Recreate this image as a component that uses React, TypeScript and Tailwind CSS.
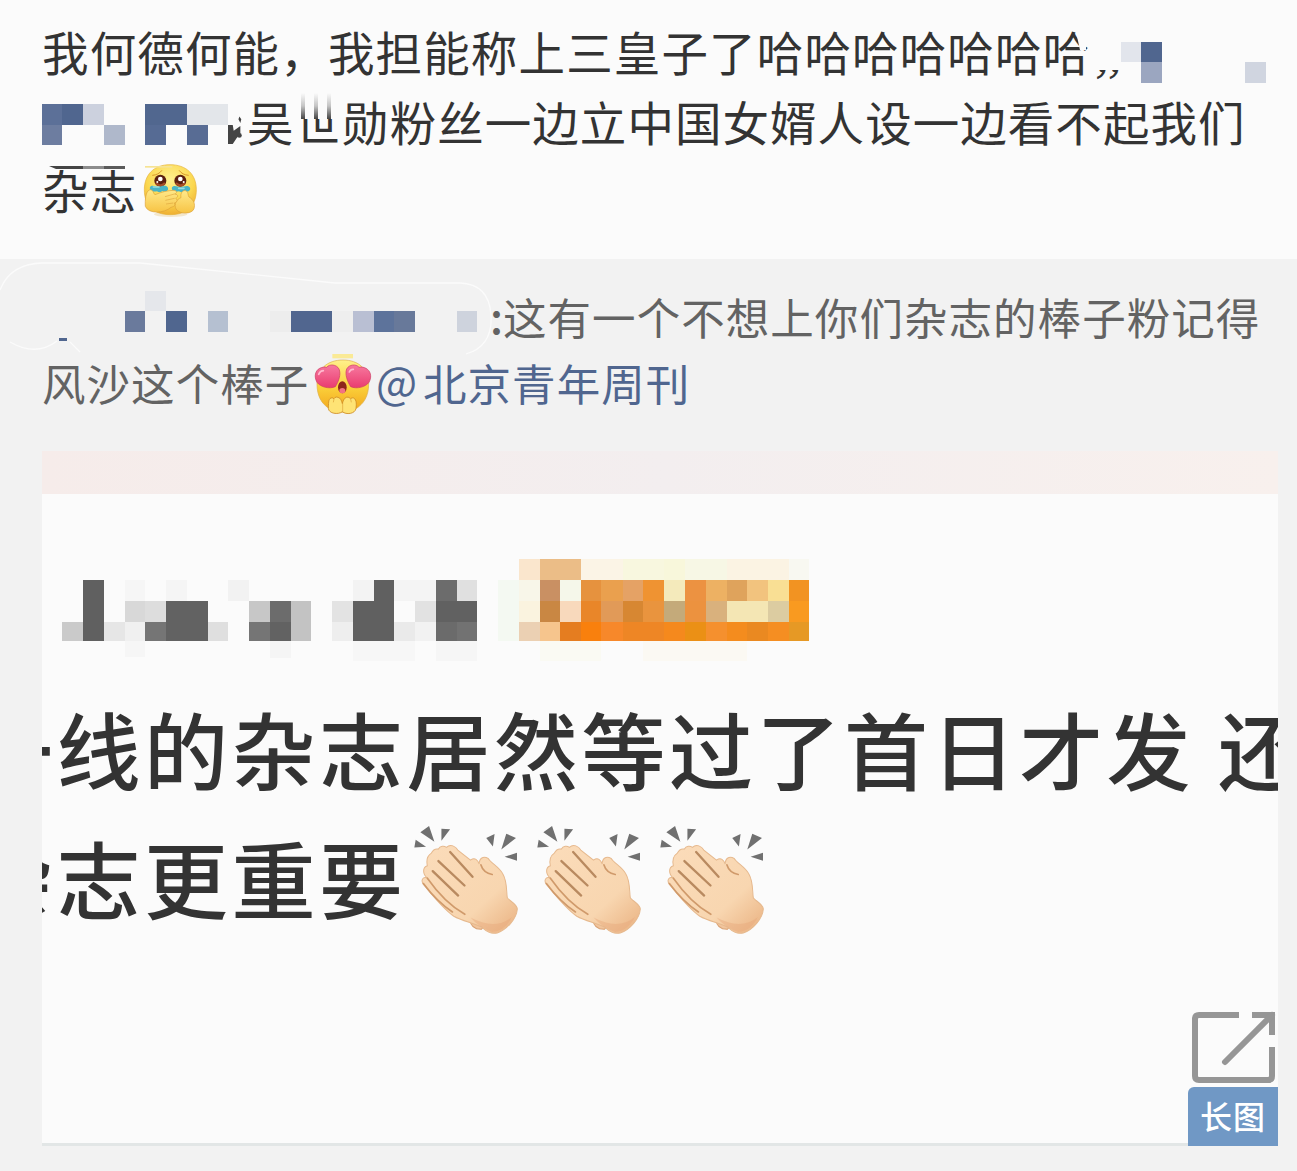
type Cell = [x: number, y: number, w: number, h: number, fill: string];

const firstLineCells: Cell[] = [
  [1121, 42, 20, 20, "#e2e5ec"],
  [1141, 42, 21, 20, "#50668f"],
  [1141, 62, 21, 21, "#9ba6c0"],
  [1245, 62, 21, 21, "#d0d5e0"],
];

const secondLineCells: Cell[] = [
  [42, 104, 20, 21, "#5c7098"],
  [62, 104, 21, 21, "#50668f"],
  [83, 104, 21, 21, "#ccd1de"],
  [42, 125, 20, 20, "#6d7da0"],
  [104, 125, 21, 20, "#afb8cb"],
  [145, 104, 42, 21, "#51678f"],
  [187, 104, 41, 21, "#e3e6ea"],
  [145, 125, 21, 20, "#566b94"],
  [187, 125, 21, 20, "#586c94"],
];

const quoteCells: Cell[] = [
  [145, 290, 21, 20, "#e5e7eb"],
  [125, 310, 20, 21, "#6a7a9c"],
  [166, 310, 21, 21, "#50668f"],
  [208, 310, 20, 21, "#b5c0d1"],
  [270, 310, 21, 21, "#ededed"],
  [291, 310, 41, 21, "#51668f"],
  [332, 310, 21, 21, "#eeeeee"],
  [353, 310, 21, 21, "#b9bfd3"],
  [374, 310, 20, 21, "#5d739b"],
  [394, 310, 21, 21, "#68799a"],
  [457, 310, 20, 21, "#ced3dd"],
  [59, 337, 8, 3, "#50668f"],
];

const nameCells: Cell[] = [
  [125, 580, 20, 21, "#f6f6f6"],
  [166, 580, 21, 21, "#f5f5f5"],
  [228, 580, 21, 21, "#f2f2f2"],
  [83, 580, 21, 61, "#606060"],
  [62, 622, 21, 19, "#cacaca"],
  [104, 622, 21, 19, "#e6e6e6"],
  [125, 601, 20, 21, "#d8d8d8"],
  [145, 601, 21, 21, "#dddddd"],
  [125, 622, 20, 19, "#f0f0f0"],
  [145, 622, 21, 19, "#757575"],
  [166, 601, 42, 40, "#626262"],
  [208, 622, 20, 19, "#dfdfdf"],
  [249, 601, 21, 21, "#c7c7c7"],
  [249, 622, 21, 19, "#757575"],
  [270, 601, 21, 21, "#6c6c6c"],
  [270, 622, 21, 19, "#626262"],
  [291, 601, 20, 40, "#c3c3c3"],
  [353, 580, 21, 21, "#f3f3f3"],
  [332, 601, 21, 21, "#e3e3e3"],
  [332, 622, 21, 19, "#eeeeee"],
  [353, 601, 21, 40, "#606060"],
  [374, 580, 20, 61, "#606060"],
  [394, 580, 42, 21, "#f4f4f4"],
  [394, 622, 21, 19, "#eaeaea"],
  [415, 622, 21, 19, "#f2f2f2"],
  [415, 601, 21, 21, "#e2e2e2"],
  [436, 580, 21, 21, "#6c6c6c"],
  [457, 580, 20, 21, "#e0e0e0"],
  [436, 601, 41, 21, "#616161"],
  [436, 622, 21, 19, "#6b6b6b"],
  [457, 622, 20, 19, "#727272"],
  [125, 641, 20, 16, "#f6f6f6"],
  [270, 641, 21, 17, "#f5f5f5"],
  [353, 641, 62, 20, "#f7f7f7"],
  [436, 641, 41, 20, "#f6f6f6"],
];

const badgeCells: Cell[] = [
  [498, 580, 21, 61, "#f4f9f2"],
  [519, 559, 21, 21, "#fae6cd"],
  [540, 559, 41, 21, "#ebbd87"],
  [581, 559, 42, 21, "#fbf4e6"],
  [623, 559, 41, 21, "#f8f7df"],
  [664, 559, 21, 21, "#f8f7db"],
  [685, 559, 42, 21, "#f7f7e5"],
  [727, 559, 62, 21, "#fbf3e3"],
  [789, 559, 20, 21, "#f8f8f1"],
  [519, 580, 21, 21, "#f8f6e9"],
  [540, 580, 20, 21, "#c99063"],
  [560, 580, 21, 21, "#f5f7ea"],
  [581, 580, 20, 21, "#e6923e"],
  [601, 580, 22, 21, "#eaa04e"],
  [623, 580, 20, 21, "#e5a265"],
  [643, 580, 21, 21, "#ef9332"],
  [664, 580, 21, 21, "#f4eabb"],
  [685, 580, 21, 21, "#ec9241"],
  [706, 580, 21, 21, "#edb163"],
  [727, 580, 20, 21, "#dfa35c"],
  [747, 580, 21, 21, "#f2c37e"],
  [768, 580, 21, 21, "#f9df94"],
  [789, 580, 20, 21, "#f29322"],
  [519, 601, 21, 21, "#faf3df"],
  [540, 601, 20, 21, "#c98743"],
  [560, 601, 21, 21, "#f8d9bc"],
  [581, 601, 20, 21, "#e98629"],
  [601, 601, 22, 21, "#e19a58"],
  [623, 601, 20, 21, "#d78732"],
  [643, 601, 21, 21, "#e9943e"],
  [664, 601, 21, 21, "#c4aa7a"],
  [685, 601, 21, 21, "#ec923f"],
  [706, 601, 21, 21, "#d9b17d"],
  [727, 601, 41, 21, "#f4e6b4"],
  [768, 601, 21, 21, "#dccca1"],
  [789, 601, 20, 21, "#f99a20"],
  [519, 622, 21, 19, "#ebd0b3"],
  [540, 622, 20, 19, "#f6c58d"],
  [560, 622, 21, 19, "#e57d20"],
  [581, 622, 20, 19, "#f9800d"],
  [601, 622, 22, 19, "#f7882a"],
  [623, 622, 41, 19, "#ee8625"],
  [664, 622, 21, 19, "#f5891d"],
  [685, 622, 21, 19, "#eb9015"],
  [706, 622, 21, 19, "#f5902e"],
  [727, 622, 20, 19, "#f48c1e"],
  [747, 622, 21, 19, "#ea8921"],
  [768, 622, 21, 19, "#f58e22"],
  [789, 622, 20, 19, "#e69925"],
  [540, 641, 61, 20, "#fafaf3"],
  [643, 641, 104, 20, "#fbf9f3"],
];

function Mosaic({ cells, box, className }: { cells: Cell[]; box: string; className: string }) {
  return (
    <svg viewBox={box} className={className} shapeRendering="crispEdges">
      {cells.map(([x, y, w, h, fill]) => (
        <rect key={`${x}-${y}`} x={x} y={y} width={w} height={h} fill={fill} />
      ))}
    </svg>
  );
}

function TearyEmoji() {
  return (
    <svg viewBox="36 24 171 168" className="h-[56px] w-[57px] shrink-0">
      <defs>
        <radialGradient id="teary" cx=".5" cy=".3" r=".75">
          <stop offset="0" stopColor="#fff08e" />
          <stop offset=".6" stopColor="#fbd850" />
          <stop offset="1" stopColor="#eda72c" />
        </radialGradient>
        <linearGradient id="tearyHand" x1="0" y1="0" x2="0" y2="1">
          <stop offset="0" stopColor="#ffe98a" />
          <stop offset="1" stopColor="#f7c445" />
        </linearGradient>
      </defs>
      <ellipse cx="122" cy="181" rx="50" ry="8" fill="#f3e7cd" />
      <path d="M120 32C169 32 199 61 199 107c0 48-28 75-78 75s-78-27-78-75c0-45 29-75 77-75z" fill="url(#teary)" stroke="#e5b33d" strokeWidth="2" />
      <path d="M45 36h82v5H45z" fill="#f6e394" />
      <path d="M68 64c12-1 21-6 27-14M148 50c6 8 15 13 27 14" fill="none" stroke="#d9972b" strokeWidth="3" strokeLinecap="round" />
      <circle cx="91" cy="80" r="18" fill="#5b1f10" />
      <circle cx="151" cy="80" r="18" fill="#5b1f10" />
      <path d="M78 87q13 15 27 0M138 87q13 15 27 0" stroke="#a64d26" strokeWidth="7" fill="none" />
      <circle cx="91" cy="75" r="7" fill="#fff" />
      <circle cx="151" cy="75" r="7" fill="#fff" />
      <circle cx="82" cy="84" r="3" fill="#fff" />
      <circle cx="161" cy="84" r="3" fill="#fff" />
      <path d="M60 99c6-9 17 0 26-1s21-7 27 2c5 9-6 18-16 11-6 6-12 4-16 1-13 3-24-3-21-13z" fill="#49b4c6" />
      <path d="M126 100c7-9 18 0 27-1s20-7 26 1c6 9-6 17-16 11-6 5-12 4-16 1-13 4-24-2-21-12z" fill="#49b4c6" />
      <path d="M70 99h17M146 103h16" stroke="#99dee1" strokeWidth="5" strokeLinecap="round" />
      <path d="M153 131c-3-15 7-25 16-20 7 4 4 13 8 18 15 9 19 22 15 35-6 17-43 18-54 1-7-14 1-29 15-34z" fill="url(#tearyHand)" stroke="#dda23a" strokeWidth="2" />
      <path d="M46 157c-1-17 0-46 14-50 10-1 10 13 15 15 17-7 38-13 57-13 11 2 9 9 2 11 12 1 11 10 3 13 8 5 4 12-4 14 4 7-1 11-10 13-20 18-68 21-77-3z" fill="url(#tearyHand)" stroke="#dda23a" strokeWidth="2" />
      <path d="M133 120l-28 8M134 133l-28 6M130 147l-22 3" stroke="#dfa840" strokeWidth="2" />
    </svg>
  );
}

function HeartEyesEmoji() {
  return (
    <svg viewBox="42 18 174 186" className="h-[62px] w-[58px] shrink-0">
      <defs>
        <linearGradient id="faceGold" x1="0" y1="0" x2="0" y2="1">
          <stop offset="0" stopColor="#fff18c" />
          <stop offset=".5" stopColor="#fbd23c" />
          <stop offset="1" stopColor="#f2a51c" />
        </linearGradient>
        <linearGradient id="heartPink" x1="0" y1="0" x2="0" y2="1">
          <stop offset="0" stopColor="#f7799f" />
          <stop offset="1" stopColor="#ea3c70" />
        </linearGradient>
      </defs>
      <path d="M97 21h62v13H97z" fill="#faea96" />
      <path d="M129 39c47 0 77 28 77 72 0 35-14 60-40 75-12 12-59 13-76 0-26-15-39-40-39-75 0-44 30-72 78-72z" fill="url(#faceGold)" stroke="#ddad48" strokeWidth="2" />
      <g fill="url(#heartPink)" stroke="#ca3a62" strokeWidth="2">
        <path d="M80 61C88 50 110 52 117 66c7 16-1 37-11 53-18 8-45 1-55-13-10-18-5-35 8-42 8-4 16-5 21-3z" />
        <path d="M177 61c-8-11-30-9-37 5-6 16 2 37 12 53 18 8 45 1 55-13 10-18 4-35-9-42-8-4-16-5-21-3z" />
      </g>
      <path d="M56 82q5-11 14-11M148 75q4-9 12-8" stroke="#ffb9ce" strokeWidth="5" fill="none" strokeLinecap="round" />
      <ellipse cx="127" cy="121" rx="13" ry="18" fill="#8d251b" />
      <ellipse cx="127" cy="131" rx="9" ry="8" fill="#f37283" />
      <path d="M85 184c1-12-1-28 8-31 6-3 8 3 8 3s5-9 13-5c9 2 11 12 13 19 2-7 4-16 12-19 8-3 13 5 13 5s3-5 9-3c10 5 8 23 7 31-2 17-30 20-41 10-12 10-41 6-42-10z" fill="#fee375" stroke="#cf8a22" strokeWidth="2.5" />
      <path d="M128 168v26M102 156l-2 10M152 156l2 10" stroke="#dda237" strokeWidth="2" />
    </svg>
  );
}

function ClapEmoji() {
  return (
    <svg viewBox="40 25 320 335" className="h-[112px] w-[107px] shrink-0">
      <defs>
        <linearGradient id="skin" x1="0" y1="0" x2="1" y2="1">
          <stop offset="0" stopColor="#fbdcba" />
          <stop offset=".65" stopColor="#f8d6b0" />
          <stop offset="1" stopColor="#e9b07f" />
        </linearGradient>
      </defs>
      <g fill="#707070">
        <path d="M44 98l4-23 31 21zM62 53l26-19 16 47zM125 42l26 2-26 34zM259 70l25-12-5 37zM319 57l29 13-44 34zM314 126l37-12v24z" />
      </g>
      <path d="M210 314q4 30 35 29l20-26z" fill="#f1c49c" stroke="#d9a172" strokeWidth="3" />
      <path d="M70 207c-8-14 3-23 13-17-15-13-15-32 0-37-4-18 1-31 12-38 4-8 12-14 21-12 5-10 17-10 24-5 12-12 28-3 34 8l38 30c13-9 22-1 26 12 0-18 12-25 27-17 8 14 31 24 43 45 14 22 11 53 14 72 3 8 30 20 30 34-2 29-31 62-60 72-21 4-32-5-46-17-24-13-58-18-84-33-33-23-61-59-92-97z" fill="url(#skin)" stroke="#e6b98e" strokeWidth="3" />
      <path d="M151 112l67 74M116 139l78 73M99 169l76 73" fill="none" stroke="#b98a60" strokeWidth="7" strokeLinecap="round" />
      <path d="M83 190q51 73 112 108M71 206q41 55 87 85M243 150q7 24 34 29" fill="none" stroke="#d09a6b" strokeWidth="5" strokeLinecap="round" />
      <path d="M212 308q28 32 65 43 38-3 59-45-50 41-124 2z" fill="#e5a577" opacity=".4" />
    </svg>
  );
}

function ExpandIcon() {
  return (
    <svg viewBox="1190 1010 88 75" className="h-[75px] w-[88px]" fill="none" stroke="#969696" strokeWidth="6">
      <path d="M1239 1015h-40q-4 0-4 4v57q0 4 4 4h69q4 0 4-4v-29" />
      <path d="M1252 1015h20v20" />
      <path d="M1272 1015l-47 47" strokeLinecap="round" />
    </svg>
  );
}

// leftover strokes where the erased name runs into the text
function Smear() {
  return (
    <svg viewBox="228 100 20 50" className="mt-[6px] h-[50px] w-[19px] shrink-0" fill="#444">
      <path d="M228 125h5l1 6 7-5v8l-4 5-4 6h-5zM240 116l2 3-1 4-2-4z" />
      <circle cx="240" cy="136" r="2.5" />
    </svg>
  );
}

function Post() {
  return (
    <section className="h-[259px] bg-[#fbfbfb] pt-[18px] pl-[42px] text-[46.5px] tracking-[1.15px] text-[#333]">
      <div className="relative flex h-[69px] items-center leading-[69px]">
        <span className="mt-[-4px]">我何德何能，我担能称上三皇子了哈哈哈哈哈哈哈</span>
        <span className="ml-[6px] pt-[8px] text-[36px] leading-[59px] font-medium tracking-[2px] italic">,,</span>
        <div className="absolute top-[42px] left-[1050px] h-[10px] w-[29px] bg-[#fbfbfb]" />
        <svg viewBox="0 0 10 18" className="absolute top-[14px] left-[1034px] h-[18px] w-[10px]">
          <path d="M0 0h10v18H4z" fill="#fbfbfb" />
        </svg>
        <Mosaic cells={firstLineCells} box="1121 42 145 41" className="absolute top-[24px] left-[1079px] h-[41px] w-[145px]" />
      </div>
      <div className="relative flex h-[69px] items-center leading-[69px]">
        <Mosaic cells={secondLineCells} box="42 104 186 41" className="mt-[6px] h-[41px] w-[186px] shrink-0" />
        <Smear />
        <span className="mt-[-3px] tracking-[1.05px] whitespace-nowrap">吴世勋粉丝一边立中国女婿人设一边看不起我们</span>
        <svg viewBox="296 93 44 26" className="absolute top-[6px] left-[254px] h-[26px] w-[44px]">
          <defs>
            <linearGradient id="fade" x1="0" y1="0" x2="0" y2="1">
              <stop offset="0" stopColor="#fbfbfb" />
              <stop offset=".5" stopColor="#c4c4c4" />
              <stop offset="1" stopColor="#444" />
            </linearGradient>
          </defs>
          <path d="M296 93h44v26h-44z" fill="#fbfbfb" />
          <path d="M301 93h4v26h-4zM314 93h4v26h-4zM327 93h4v26h-4z" fill="url(#fade)" />
        </svg>
      </div>
      <div className="relative flex h-[67px] items-center leading-[67px]">
        <span className="mt-[-3px] w-[100px]">杂志</span>
        <TearyEmoji />
        <svg viewBox="42 156 88 14" className="absolute top-0 left-0 h-[14px] w-[88px]">
          <path d="M42 156h88v14H42z" fill="#fbfbfb" />
          <path d="M49 166h34v3H56z" fill="#444" />
          <path d="M83 166h21v3H83z" fill="#8c8c8c" />
          <path d="M104 166h21v3h-21z" fill="#5a5a5a" />
        </svg>
      </div>
    </section>
  );
}

function Quote() {
  return (
    <div className="relative pt-[26px] pl-[42px] text-[43.5px] tracking-[1.05px] text-[#636363]">
      <svg viewBox="0 259 500 100" className="absolute top-0 left-0 h-[100px] w-[500px]" fill="none" stroke="#fbfbfb" strokeWidth="1.3">
        <path d="M0 290Q10 264 42 263H140L335 283H460Q489 284 491 315T466 354M10 342q26 15 47-1M70 342l10 10" />
      </svg>
      <div className="flex h-[66px] items-center leading-[66px]">
        <Mosaic cells={quoteCells} box="42 290 448 50" className="relative mt-[-5px] h-[50px] w-[448px] shrink-0" />
        <span className="mt-[-4px] w-[13px] shrink-0 font-medium">:</span>
        <span className="mt-[-2px] whitespace-nowrap">这有一个不想上你们杂志的棒子粉记得</span>
      </div>
      <div className="flex h-[66px] items-center leading-[66px]">
        <span className="mt-[-2px] w-[272px]">风沙这个棒子</span>
        <HeartEyesEmoji />
        <span className="mt-[-6px] ml-[4px] w-[47px] text-[#50668f]">@</span>
        <span className="mt-[-2px] text-[#50668f]">北京青年周刊</span>
      </div>
    </div>
  );
}

function LongImage() {
  return (
    <div className="relative mt-[34px] ml-[42px] h-[695px] w-[1236px] overflow-hidden bg-[#fbfbfb] text-[84px] font-medium tracking-[3.5px] whitespace-nowrap text-[#333]">
      <div className="h-[43px] bg-linear-to-r from-[#f6ecea] via-[#f3eeef] to-[#f8f0ed]" />
      <div className="flex pt-[65px] pl-[20px]">
        <Mosaic cells={nameCells} box="62 559 436 102" className="h-[102px] w-[436px]" />
        <Mosaic cells={badgeCells} box="498 559 311 102" className="h-[102px] w-[311px]" />
      </div>
      <div className="mt-[22px] ml-[-73px] flex h-[129px] items-center leading-[129px]">
        <span>一线的杂志居然等过了首日才发</span>
        <span className="ml-[24px]">还</span>
      </div>
      <div className="ml-[-73px] flex h-[129px] items-center leading-[129px]">
        <span className="w-[444px] shrink-0">杂志更重要</span>
        <div className="flex gap-[16px] pt-[4px]">
          <ClapEmoji />
          <ClapEmoji />
          <ClapEmoji />
        </div>
      </div>
      <div className="absolute inset-x-0 bottom-0 h-[3px] bg-[#e2e6e6]" />
      <div className="absolute right-0 bottom-0 flex flex-col items-end gap-[2px]">
        <ExpandIcon />
        <div className="flex h-[59px] w-[90px] items-center justify-center rounded-tl-[6px] bg-[#7098c5] pb-[2px] text-[32px] leading-[57px] tracking-[1px] text-white">
          长图
        </div>
      </div>
    </div>
  );
}

export default function App() {
  return (
    <main className="h-[1171px] w-[1297px] overflow-hidden bg-[#f2f2f2] font-['Noto_Sans_CJK_SC',sans-serif]">
      <Post />
      <Quote />
      <LongImage />
    </main>
  );
}
